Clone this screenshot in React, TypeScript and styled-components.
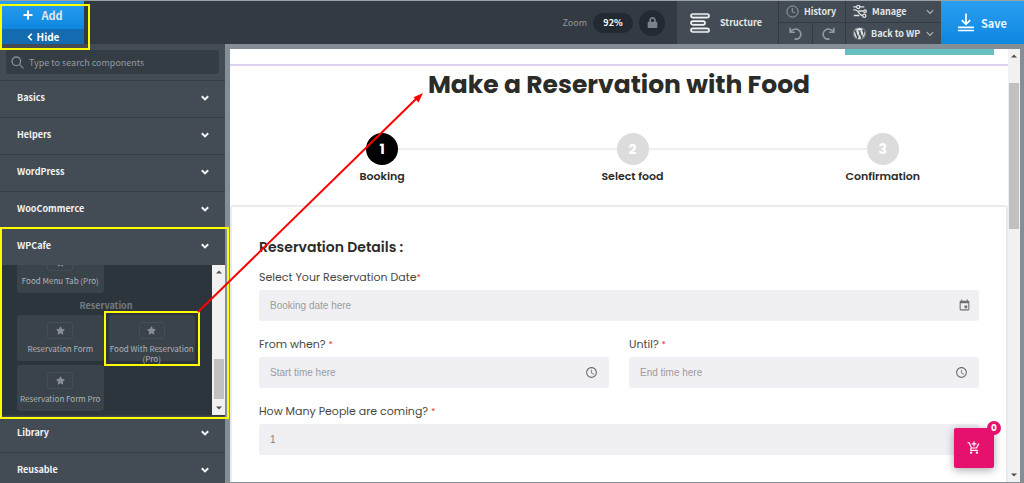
import React from "react";
import styled, { createGlobalStyle, css } from "styled-components";
import { FaLock, FaStar, FaWordpress } from "react-icons/fa";
import { MdAccessTime, MdAddShoppingCart, MdEvent } from "react-icons/md";

const ui = `"Source Sans Pro", "Noto Sans CJK SC", sans-serif`;
const site = `Poppins, Inter, "Open Sans", sans-serif`;

const GlobalStyle = createGlobalStyle`
  *, *::before, *::after { box-sizing: border-box; }
  body { margin: 0; font-family: ${ui}; background: #858d95; }
  button, input, select { font: inherit; color: inherit; border: 0; padding: 0; margin: 0; background: none; border-radius: 0; }
  button { cursor: pointer; }
  h1, h2, p, ul, ol { margin: 0; padding: 0; list-style: none; }
  svg { display: block; flex: none; }
`;

const Shell = styled.div`
  position: relative;
  display: flex;
  flex-direction: column;
  height: 100vh;
  overflow: hidden;
  border-top: 1px solid #9ba1a4;
`;

const Toolbar = styled.header`
  display: flex;
  height: 43px;
  flex: none;
  background: #333a41;
  color: #e4e6e8;
  font-size: 9px;
  line-height: 16px;
  font-weight: 600;
`;

const AddGroup = styled.div`
  display: flex;
  flex-direction: column;
  width: 84px;
`;

const AddButton = styled.button`
  display: flex;
  align-items: center;
  justify-content: center;
  gap: 8px;
  height: 28px;
  padding-left: 2px;
  background: linear-gradient(#2a9ff2, #0d87df);
  font-size: 11px;
`;

const HideButton = styled.button`
  display: flex;
  align-items: center;
  justify-content: center;
  gap: 4px;
  height: 15px;
  padding-left: 2px;
  background: #136cb0;
  font-size: 10px;
  line-height: 15px;
  color: #fff;
`;

const ZoomGroup = styled.div`
  display: flex;
  align-items: center;
  gap: 6px;
  margin-left: auto;
  margin-right: 12px;
`;

const ZoomLabel = styled.span`
  color: #9299a0;
  font-weight: 400;
`;

const ZoomValue = styled.button`
  width: 40px;
  height: 20px;
  border-radius: 10px;
  background: #222a31;
  color: #fff;
`;

const LockButton = styled.button`
  display: grid;
  place-items: center;
  width: 26px;
  height: 26px;
  border-radius: 50%;
  background: #222a31;
  color: #7b8289;
`;

const StructureButton = styled.button`
  display: flex;
  align-items: center;
  gap: 10px;
  width: 101px;
  padding-left: 13px;
  background: #434c54;
`;

const ToolGrid = styled.div<{ $width: number }>`
  display: grid;
  grid-template-columns: 1fr 1fr;
  grid-template-rows: 21px 21px;
  gap: 1px;
  width: ${(p) => p.$width}px;
  padding-left: 1px;
`;

const ToolButton = styled.button<{ $wide?: boolean; $muted?: boolean }>`
  display: flex;
  align-items: center;
  gap: 5px;
  padding: 0 7px;
  background: #434c54;
  white-space: nowrap;
  ${(p) => p.$wide && css`grid-column: span 2;`}
  ${(p) => p.$muted && css`justify-content: center; color: #9299a0;`}
`;

const Trailing = styled.span`
  margin-left: auto;
  color: #aeb3b8;
`;

const SaveButton = styled.button`
  display: flex;
  align-items: center;
  justify-content: center;
  gap: 7px;
  width: 83px;
  background: linear-gradient(#2a9ff2, #0d87df);
  color: #e9f4fd;
  font-size: 11px;
`;

const Workspace = styled.div`
  display: flex;
  flex: 1;
  min-height: 0;
`;

const Sidebar = styled.aside`
  display: flex;
  flex-direction: column;
  flex: none;
  width: 225px;
  background: #434c54;
  color: #f2f3f4;
`;

const SearchBox = styled.label`
  display: flex;
  align-items: center;
  gap: 5px;
  flex: none;
  height: 24px;
  margin: 6px 6px;
  padding: 0 5px;
  border-radius: 3px;
  background: #353d44;
  color: #868d94;
`;

const SearchInput = styled.input`
  flex: 1;
  min-width: 0;
  font-size: 9px;
  outline: 0;
  &::placeholder { color: #9299a0; opacity: 1; }
`;

const SectionButton = styled.button`
  display: flex;
  align-items: center;
  justify-content: space-between;
  flex: none;
  height: 37px;
  padding: 0 16px 2px 17px;
  border-top: 1px solid #353d44;
  font-size: 9px;
  line-height: 16px;
  font-weight: 600;
`;

const Panel = styled.div`
  display: flex;
  flex: none;
  height: 150px;
  background: #2d353c;
`;

const PanelContent = styled.div`
  display: flex;
  flex-direction: column;
  justify-content: flex-end;
  flex: 1;
  padding: 0 17px 4px;
  overflow: hidden;
  color: #b0b5ba;
`;

const PanelHeading = styled.p`
  flex: none;
  height: 22px;
  padding-top: 3px;
  color: #737a81;
  font-size: 9px;
  line-height: 20px;
  font-weight: 600;
  text-align: center;
`;

const TileGrid = styled.div`
  display: grid;
  grid-template-columns: 1fr 1fr;
  grid-auto-rows: 46px;
  gap: 4px 5px;
`;

const Tile = styled.button`
  display: flex;
  flex-direction: column;
  align-items: center;
  gap: 5px;
  padding-top: 7px;
  border-radius: 3px;
  background: #3a424a;
  font-size: 8px;
  line-height: 10px;
  white-space: nowrap;
`;

const TileIcon = styled.span`
  display: grid;
  place-items: center;
  flex: none;
  width: 26px;
  height: 17px;
  border: 1px solid #454d55;
  border-radius: 3px;
  color: #858c93;
`;

const Track = styled.div<{ $width: number }>`
  display: flex;
  flex-direction: column;
  align-items: center;
  flex: none;
  width: ${(p) => p.$width}px;
  padding: 4px 0;
  background: #f1f1f1;
  color: #505050;
`;

const TrackSpace = styled.div<{ $grow: number }>`
  flex: ${(p) => p.$grow};
`;

const Thumb = styled.div<{ $height: number }>`
  width: 10px;
  height: ${(p) => p.$height}px;
  background: #c1c1c1;
`;

const Canvas = styled.div`
  display: flex;
  flex: 1;
  min-width: 0;
  padding: 5px 4px 1px 5px;
  background: #858d95;
`;

const Page = styled.main`
  position: relative;
  flex: 1;
  min-width: 0;
  overflow: hidden;
  background: #fff;
  color: #2b2b28;
  font-family: ${site};
`;

const Banner = styled.div`
  display: flex;
  justify-content: flex-end;
  height: 17px;
  padding-right: 14px;
  border-bottom: 2px solid #ddd2f0;
`;

const BannerBlock = styled.div`
  width: 149px;
  height: 6px;
  background: #66bfc1;
`;

const Title = styled.h1`
  padding-top: 1px;
  font-size: 25px;
  line-height: 36px;
  font-weight: 700;
  text-align: center;
`;

const Steps = styled.ol`
  display: grid;
  grid-template-columns: repeat(3, 1fr);
  padding: 30px 0 18px 27px;
`;

const Step = styled.li`
  display: flex;
  flex-direction: column;
  align-items: center;
  font-size: 11px;
  line-height: 22px;
  font-weight: 600;
`;

const StepRow = styled.div`
  display: flex;
  align-items: center;
  align-self: stretch;
`;

const StepLine = styled.span<{ $hidden: boolean }>`
  flex: 1;
  height: 2px;
  background: ${(p) => (p.$hidden ? "transparent" : "#eee")};
`;

const StepNumber = styled.span<{ $active: boolean }>`
  display: grid;
  place-items: center;
  width: 32px;
  height: 32px;
  border-radius: 50%;
  background: ${(p) => (p.$active ? "#000" : "#dcdcdc")};
  color: #fff;
  font-size: 14px;
  font-weight: 700;
`;

const Card = styled.form`
  display: grid;
  grid-template-columns: 1fr 1fr;
  column-gap: 20px;
  row-gap: 13px;
  padding: 28px 27px 60px;
  border: 2px solid #ebebeb;
  border-radius: 3px;
`;

const CardTitle = styled.h2`
  grid-column: span 2;
  margin-bottom: -5px;
  font-size: 14px;
  line-height: 24px;
  font-weight: 600;
`;

const Field = styled.div<{ $wide?: boolean }>`
  display: flex;
  flex-direction: column;
  ${(p) => p.$wide && css`grid-column: span 2;`}
`;

const FieldLabel = styled.label`
  height: 23px;
  font-size: 11px;
  line-height: 20px;
  color: #484843;
`;

const Star = styled.span`
  color: #f03a3a;
  font-size: 9px;
`;

const FieldBox = styled.div<{ $end?: number }>`
  display: flex;
  align-items: center;
  height: 31px;
  padding: 0 ${(p) => p.$end ?? 11}px 0 11px;
  border-radius: 3px;
  background: #f0eff4;
  color: #6f6f6f;
`;

const fieldControl = css`
  flex: 1;
  min-width: 0;
  height: 31px;
  outline: 0;
  appearance: none;
  font-family: "Liberation Sans", sans-serif;
  font-size: 10px;
`;

const TextInput = styled.input`
  ${fieldControl}
  &::placeholder { color: #9c9c9c; opacity: 1; }
`;

const Select = styled.select`
  ${fieldControl}
  color: #808080;
`;

const CartButton = styled.button`
  position: absolute;
  right: 14px;
  bottom: 14px;
  display: grid;
  place-items: center;
  width: 40px;
  height: 40px;
  border-radius: 2px;
  background: #e6106e;
  color: #fff;
  box-shadow: 0 2px 8px rgba(0, 0, 0, 0.35);
`;

const CartBadge = styled.span`
  position: absolute;
  top: -7px;
  right: -7px;
  width: 14px;
  height: 14px;
  border-radius: 50%;
  background: #e6106e;
  font-size: 9px;
  line-height: 14px;
  font-weight: 700;
  text-align: center;
`;

const Highlight = styled.div<{ $x: number; $y: number; $w: number; $h: number }>`
  position: absolute;
  left: ${(p) => p.$x}px;
  top: ${(p) => p.$y}px;
  width: ${(p) => p.$w}px;
  height: ${(p) => p.$h}px;
  border: 2px solid #ffff00;
  pointer-events: none;
`;

const Arrow = styled.svg`
  position: absolute;
  left: 190px;
  top: 84px;
  pointer-events: none;
`;

const Chevron = ({ size = 8, weight = 2 }: { size?: number; weight?: number }) => (
  <svg width={size} height={size} viewBox="0 0 8 8" fill="none" stroke="currentColor" strokeWidth={weight}>
    <path d="M.8 2.2 4 5.4l3.2-3.2" />
  </svg>
);

const Caret = ({ up = false }: { up?: boolean }) => (
  <svg width="6" height="6" viewBox="0 0 6 6" fill="currentColor">
    <path d={up ? "M0 4.5h6L3 1.5z" : "M0 1.5h6L3 4.5z"} />
  </svg>
);

const PlusIcon = () => (
  <svg width="10" height="10" viewBox="0 0 10 10" stroke="#fff" strokeWidth="2">
    <path d="M5 .5v9M.5 5h9" />
  </svg>
);

const BackIcon = () => (
  <svg width="6" height="8" viewBox="0 0 6 8" fill="none" stroke="#fff" strokeWidth="1.6">
    <path d="M4.8.8 1.5 4l3.3 3.2" />
  </svg>
);

const SearchIcon = () => (
  <svg width="13" height="13" viewBox="0 0 13 13" fill="none" stroke="currentColor" strokeWidth="1.3">
    <circle cx="5.3" cy="5.3" r="4.3" />
    <path d="m8.4 8.4 4 4" />
  </svg>
);

const StructureIcon = () => (
  <svg width="20" height="20" viewBox="0 0 20 20" fill="#59616a" stroke="#f0f1f2" strokeWidth="1.7">
    <rect x="1" y="1" width="18" height="3.6" rx="1.8" />
    <rect x="1" y="8.2" width="14" height="3.6" rx="1.8" />
    <rect x="1" y="15.4" width="18" height="3.6" rx="1.8" />
  </svg>
);

const HistoryIcon = () => (
  <svg width="13" height="13" viewBox="0 0 13 13" fill="none" stroke="#9ba1a7" strokeWidth="1">
    <circle cx="6.5" cy="6.5" r="5.6" />
    <path d="M6.3 3v3.8l2.6 1" />
  </svg>
);

const UndoIcon = ({ flip = false }: { flip?: boolean }) => (
  <svg width="13" height="13" viewBox="0 0 13 13" fill="none" stroke="currentColor" strokeWidth="1.6">
    <g transform={flip ? "translate(13 0) scale(-1 1)" : undefined}>
      <path d="M1.2.8v4.400h4.600" />
      <path d="M1.6 4.8C3.400 1.900 7.200 1.300 9.700 3.100c2.700 2 3 5.500.7 7.700-1.400 1.300-3.200 1.600-5 1.200" />
    </g>
  </svg>
);

const ManageIcon = () => (
  <svg width="14" height="13" viewBox="0 0 14 13" fill="none" stroke="#dfe1e3" strokeWidth="1.3">
    <path d="M.3 1.8h3M6.8 1.8h4.5M.3 4.8h2c3 0 4 5.8 7.5 5.8M5.500 6h5M.8 10.500h5.500" />
    <circle cx="5.2" cy="2" r="1.6" />
    <circle cx="12" cy="6.3" r="1.3" />
    <circle cx="11.3" cy="10.7" r="1.6" />
  </svg>
);

const SaveIcon = () => (
  <svg width="16" height="19" viewBox="0 0 16 19" fill="none" stroke="#fff" strokeWidth="1.7">
    <path d="M8 .5v10.5M3.8 7.2 8 11.3l4.2-4.1M0 14.300h16M0 17.500h16" />
  </svg>
);

const ComponentTile = ({ name }: { name: React.ReactNode }) => (
  <Tile type="button">
    <TileIcon><FaStar size={9} /></TileIcon>
    <span>{name}</span>
  </Tile>
);

const Section = ({ name }: { name: string }) => (
  <SectionButton type="button">
    {name}
    <Chevron />
  </SectionButton>
);

const steps = ["Booking", "Select food", "Confirmation"];

export default function App() {
  return (
    <>
      <GlobalStyle />
      <Shell>
        <Toolbar>
          <AddGroup>
            <AddButton type="button"><PlusIcon />Add</AddButton>
            <HideButton type="button"><BackIcon />Hide</HideButton>
          </AddGroup>
          <ZoomGroup>
            <ZoomLabel>Zoom</ZoomLabel>
            <ZoomValue type="button">92%</ZoomValue>
            <LockButton type="button" aria-label="Lock zoom"><FaLock size={11} /></LockButton>
          </ZoomGroup>
          <StructureButton type="button"><StructureIcon />Structure</StructureButton>
          <ToolGrid $width={67}>
            <ToolButton type="button" $wide><HistoryIcon />History</ToolButton>
            <ToolButton type="button" $muted aria-label="Undo"><UndoIcon /></ToolButton>
            <ToolButton type="button" $muted aria-label="Redo"><UndoIcon flip /></ToolButton>
          </ToolGrid>
          <ToolGrid $width={96}>
            <ToolButton type="button" $wide><ManageIcon />Manage<Trailing><Chevron weight={1.2} /></Trailing></ToolButton>
            <ToolButton type="button" $wide><FaWordpress size={13} />Back to WP<Trailing><Chevron weight={1.2} /></Trailing></ToolButton>
          </ToolGrid>
          <SaveButton type="button"><SaveIcon />Save</SaveButton>
        </Toolbar>

        <Workspace>
          <Sidebar>
            <SearchBox>
              <SearchIcon />
              <SearchInput type="text" placeholder="Type to search components" aria-label="Search components" />
            </SearchBox>
            <Section name="Basics" />
            <Section name="Helpers" />
            <Section name="WordPress" />
            <Section name="WooCommerce" />
            <Section name="WPCafe" />
            <Panel>
              <PanelContent>
                <TileGrid>
                  <ComponentTile name="Food Menu Tab (Pro)" />
                </TileGrid>
                <PanelHeading>Reservation</PanelHeading>
                <TileGrid>
                  <ComponentTile name="Reservation Form" />
                  <ComponentTile name={<>Food With Reservation<br />(Pro)</>} />
                  <ComponentTile name="Reservation Form Pro" />
                </TileGrid>
              </PanelContent>
              <Track $width={13}>
                <Caret up />
                <TrackSpace $grow={14} />
                <Thumb $height={40} />
                <TrackSpace $grow={1} />
                <Caret />
              </Track>
            </Panel>
            <Section name="Library" />
            <Section name="Reusable" />
          </Sidebar>

          <Canvas>
            <Page>
              <Banner><BannerBlock /></Banner>
              <Title>Make a Reservation with Food</Title>
              <Steps>
                {steps.map((label, i) => (
                  <Step key={label}>
                    <StepRow>
                      <StepLine $hidden={i === 0} />
                      <StepNumber $active={i === 0}>{i + 1}</StepNumber>
                      <StepLine $hidden={i === steps.length - 1} />
                    </StepRow>
                    {label}
                  </Step>
                ))}
              </Steps>
              <Card>
                <CardTitle>Reservation Details :</CardTitle>
                <Field $wide>
                  <FieldLabel htmlFor="date">Select Your Reservation Date<Star>*</Star></FieldLabel>
                  <FieldBox $end={8}><TextInput id="date" placeholder="Booking date here" /><MdEvent size={13} /></FieldBox>
                </Field>
                <Field>
                  <FieldLabel htmlFor="from">From when? <Star>*</Star></FieldLabel>
                  <FieldBox><TextInput id="from" placeholder="Start time here" /><MdAccessTime size={13} /></FieldBox>
                </Field>
                <Field>
                  <FieldLabel htmlFor="until">Until? <Star>*</Star></FieldLabel>
                  <FieldBox><TextInput id="until" placeholder="End time here" /><MdAccessTime size={13} /></FieldBox>
                </Field>
                <Field $wide>
                  <FieldLabel htmlFor="people">How Many People are coming? <Star>*</Star></FieldLabel>
                  <FieldBox><Select id="people" defaultValue="1"><option>1</option></Select></FieldBox>
                </Field>
              </Card>
              <CartButton type="button" aria-label="Cart">
                <MdAddShoppingCart size={14} />
                <CartBadge>0</CartBadge>
              </CartButton>
            </Page>
            <Track $width={12}>
              <Caret up />
              <TrackSpace $grow={1} />
              <Thumb $height={146} />
              <TrackSpace $grow={10} />
              <Caret />
            </Track>
          </Canvas>
        </Workspace>

        <Highlight $x={0} $y={3} $w={90} $h={46} />
        <Highlight $x={0} $y={226} $w={229} $h={192} />
        <Highlight $x={104} $y={310} $w={96} $h={55} />
        <Arrow width="240" height="236" viewBox="0 0 240 236" aria-hidden="true">
          <path d="M8 227 226 14" stroke="#f00" strokeWidth="2" />
          <path d="m233 8-4.500 9.500-5-5.200z" fill="#f00" />
        </Arrow>
      </Shell>
    </>
  );
}
